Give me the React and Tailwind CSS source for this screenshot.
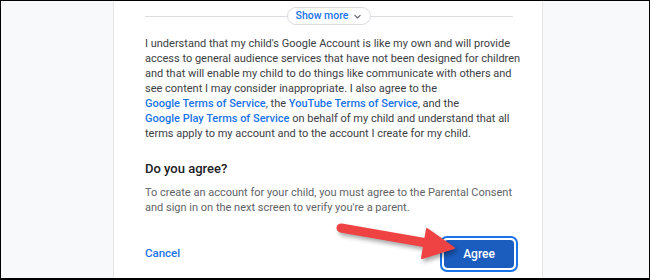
// Parental consent step (Google account for a child)
export default function App() {
    return (
        <div className="relative w-[650px] h-[280px] overflow-hidden border-t border-l border-r border-b-2 border-black bg-[#f8f9fa] font-['Roboto','Liberation_Sans',sans-serif]">
            <div className="flex h-full">
                <div className="w-[112px] shrink-0" />
                <div className="w-[430px] shrink-0 h-full bg-white border-x border-[#e4e5e7] pl-[31px] pr-[29px]">
                    {/* Show more divider */}
                    <div className="mt-[6px] flex items-center h-[18px]">
                        <div className="flex-1 h-px bg-[#dadce0]" />
                        <button className="flex items-center gap-[5px] h-[18px] px-[8px] rounded-full border border-[#dadce0] bg-white text-[10.5px] font-medium text-[#1a73e8]">
                            Show more
                            <svg className="w-[9px] h-[9px] text-[#5f6368]" viewBox="0 0 24 24" fill="none" stroke="currentColor" strokeWidth="3" strokeLinecap="round" strokeLinejoin="round">
                                <path d="M5 9l7 7 7-7" />
                            </svg>
                        </button>
                        <div className="flex-1 h-px bg-[#dadce0]" />
                    </div>

                    <p className="mt-[11px] text-[11px] leading-[15px] text-[#3c4043] whitespace-nowrap">
                        I understand that my child&apos;s Google Account is like my own and will provide<br />
                        access to general audience services that have not been designed for children<br />
                        and that will enable my child to do things like communicate with others and<br />
                        see content I may consider inappropriate. I also agree to the<br />
                        <a className="font-medium text-[#1a73e8]">Google Terms of Service</a>, the{' '}
                        <a className="font-medium text-[#1a73e8]">YouTube Terms of Service</a>, and the<br />
                        <a className="font-medium text-[#1a73e8]">Google Play Terms of Service</a> on behalf of my child and understand that all<br />
                        terms apply to my account and to the account I create for my child.
                    </p>

                    <h2 className="mt-[18px] text-[13px] leading-[20px] font-medium text-[#202124]">
                        Do you agree?
                    </h2>
                    <p className="mt-[6px] text-[11px] leading-[15px] text-[#5f6368] whitespace-nowrap">
                        To create an account for your child, you must agree to the Parental Consent<br />
                        and sign in on the next screen to verify you&apos;re a parent.
                    </p>

                    <div className="mt-[21px] flex items-center justify-between">
                        <button className="text-[11.5px] font-medium text-[#1a73e8]">Cancel</button>
                        <div className="mr-[-5px] p-[2px] rounded-[7px] border-2 border-[#1a73e8] bg-white">
                            <button className="w-[70px] h-[28px] rounded-[4px] bg-[#1b5cbf] text-[12px] font-medium text-white">
                                Agree
                            </button>
                        </div>
                    </div>
                </div>
            </div>

            {/* Red annotation arrow */}
            <svg className="absolute left-[-1px] top-[-1px] pointer-events-none drop-shadow-[2px_3px_2px_rgba(0,0,0,0.35)]" width="650" height="280" viewBox="0 0 650 280">
                <line x1="341" y1="228" x2="430" y2="243.5" stroke="#ef4343" strokeWidth="9" strokeLinecap="round" />
                <polygon points="427,229 454,248 422,258" fill="#ef4343" stroke="#ef4343" strokeWidth="2" strokeLinejoin="round" />
            </svg>
        </div>
    );
}
